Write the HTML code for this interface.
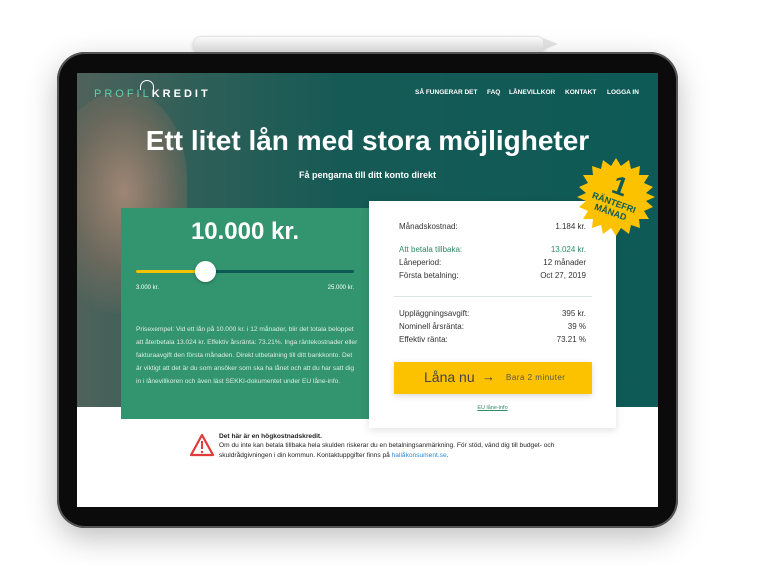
<!DOCTYPE html>
<html><head><meta charset="utf-8"><style>
*{margin:0;padding:0;box-sizing:border-box}
body{width:765px;height:566px;background:#fff;position:relative;overflow:hidden;font-family:"Liberation Sans",sans-serif}
.abs{position:absolute}
.pencil{left:193px;top:36px;width:352px;height:16px;border-radius:8px;background:linear-gradient(#fdfdfd,#e0e0e0);box-shadow:0 2px 4px rgba(0,0,0,.2),inset 0 0 0 1px #e6e6e6}
.tip{left:543px;top:38px;width:0;height:0;border-top:6px solid transparent;border-bottom:6px solid transparent;border-left:15px solid #e4e4e4}
.ipad{left:57px;top:52px;width:621px;height:476px;background:#0b0b0b;border-radius:28px;box-shadow:0 10px 30px rgba(0,0,0,.25),inset 0 0 0 2px #555}
.screen{left:77px;top:73px;width:581px;height:434px;background:#fff;overflow:hidden}
.hero{left:0;top:0;width:581px;height:334px;background:linear-gradient(90deg,#4f625b 0%,#2f5f58 20%,#165a55 45%,#0e5a57 100%)}
.face{left:-30px;top:20px;width:140px;height:220px;border-radius:50% 40% 40% 50%;background:radial-gradient(ellipse at 55% 45%,rgba(175,140,120,.85) 0%,rgba(130,110,95,.6) 45%,rgba(60,80,70,0) 75%)}
.nav{top:16px;font-size:6.5px;font-weight:bold;color:#fff;white-space:nowrap}
h1{left:0;width:581px;top:52px;text-align:center;color:#fff;font-size:28px;font-weight:bold;position:absolute}
.sub{left:0;width:581px;top:97px;text-align:center;color:#fff;font-size:9px;font-weight:bold}
.green{left:44px;top:135px;width:248px;height:211px;background:#339470}
.white{left:292px;top:128px;width:247px;height:227px;background:#fff;box-shadow:0 2px 8px rgba(0,0,0,.12)}
.row{position:absolute;left:0;width:247px;font-size:8px;color:#333}
.row span{position:absolute}
.row .l{left:30px}.row .r{right:30px}
</style></head><body>
<div class="abs pencil"></div><div class="abs tip"></div>
<div class="abs ipad"></div>
<div class="abs screen">
 <div class="abs hero"></div>
 <div class="abs face"></div>
 <div class="abs" style="left:17px;top:15px;font-size:11px;letter-spacing:3px;color:#5fd1a8">PROFIL<b style="color:#fff">KREDIT</b></div>
 <div class="abs" style="left:63px;top:7px;width:14px;height:10px;border:1.5px solid #fff;border-bottom:none;border-radius:8px 8px 0 0"></div>
 <div class="abs nav" style="left:338px">SÅ FUNGERAR DET</div>
 <div class="abs nav" style="left:410px">FAQ</div>
 <div class="abs nav" style="left:432px">LÅNEVILLKOR</div>
 <div class="abs nav" style="left:488px">KONTAKT</div>
 <div class="abs nav" style="left:530px">LOGGA IN</div>
 <h1>Ett litet lån med stora möjligheter</h1>
 <div class="abs sub">Få pengarna till ditt konto direkt</div>
 <div class="abs green">
  <div class="abs" style="left:0;width:248px;top:10px;text-align:center;color:#fff;font-size:24px;font-weight:bold">10.000 kr.</div>
  <div class="abs" style="left:15px;top:62px;width:218px;height:3px;background:#0d5a52;border-radius:2px"></div>
  <div class="abs" style="left:15px;top:62px;width:70px;height:3px;background:#f2c200;border-radius:2px"></div>
  <div class="abs" style="left:74px;top:53px;width:21px;height:21px;border-radius:50%;background:#fff;box-shadow:0 1px 3px rgba(0,0,0,.3)"></div>
  <div class="abs" style="left:15px;top:77px;font-size:6px;color:#fff">3.000 kr.</div>
  <div class="abs" style="right:15px;top:77px;font-size:6px;color:#fff">25.000 kr.</div>
  <div class="abs" style="left:15px;top:115px;width:222px;font-size:6.6px;line-height:13px;color:#d8eee4">Prisexempel: Vid ett lån på 10.000 kr. i 12 månader, blir det totala beloppet att återbetala 13.024 kr. Effektiv årsränta: 73.21%. Inga räntekostnader eller fakturaavgift den första månaden. Direkt utbetalning till ditt bankkonto. Det är viktigt att det är du som ansöker som ska ha lånet och att du har satt dig in i lånevillkoren och även läst SEKKI-dokumentet under EU låne-info.</div>
 </div>
 <div class="abs white">
  <div class="row" style="top:21px"><span class="l">Månadskostnad:</span><span class="r">1.184 kr.</span></div>
  <div class="row" style="top:44px;color:#2e8b64"><span class="l">Att betala tillbaka:</span><span class="r">13.024 kr.</span></div>
  <div class="row" style="top:57px"><span class="l">Låneperiod:</span><span class="r">12 månader</span></div>
  <div class="row" style="top:70px"><span class="l">Första betalning:</span><span class="r">Oct 27, 2019</span></div>
  <div class="abs" style="left:25px;top:95px;width:198px;height:1px;background:#dde6e4"></div>
  <div class="row" style="top:108px"><span class="l">Uppläggningsavgift:</span><span class="r">395 kr.</span></div>
  <div class="row" style="top:121px"><span class="l">Nominell årsränta:</span><span class="r">39 %</span></div>
  <div class="row" style="top:134px"><span class="l">Effektiv ränta:</span><span class="r">73.21 %</span></div>
  <div class="abs" style="left:25px;top:161px;width:198px;height:32px;background:#fcc200;box-shadow:0 2px 6px rgba(0,0,0,.15)">
   <span class="abs" style="left:30px;top:7px;font-size:14px;color:#444">Låna nu</span>
   <span class="abs" style="left:88px;top:7px;font-size:13px;color:#444">→</span>
   <span class="abs" style="left:112px;top:11px;font-size:8px;color:#555;letter-spacing:.5px">Bara 2 minuter</span>
  </div>
  <div class="abs" style="left:0;width:247px;top:204px;text-align:center;font-size:5.5px;color:#2e8b64;text-decoration:underline">EU låne-info</div>
 </div>
 <svg class="abs" style="left:500px;top:85px" width="78" height="78" viewBox="0 0 78 78">
  <polygon fill="#fcc200" points="39,0 44,8 52,2 54,11 63,8 62,17 72,17 67,25 76,29 69,35 78,39 69,43 76,49 67,53 72,61 62,61 63,70 54,67 52,76 44,70 39,78 34,70 26,76 24,67 15,70 16,61 6,61 11,53 2,49 9,43 0,39 9,35 2,29 11,25 6,17 16,17 15,8 24,11 26,2 34,8"/>
  <g transform="rotate(20 39 39)" fill="#0d5a57" font-family="Liberation Sans" font-weight="bold" text-anchor="middle">
   <text x="39" y="36" font-size="26">1</text>
   <text x="39" y="48" font-size="9">RÄNTEFRI</text>
   <text x="39" y="58" font-size="9">MÅNAD</text>
  </g>
 </svg>
 <svg class="abs" style="left:112px;top:360px" width="26" height="24" viewBox="0 0 26 24"><path d="M13 2 L24 22 H2 Z" fill="none" stroke="#e03c3c" stroke-width="2.2" stroke-linejoin="round"/><rect x="12" y="8" width="2" height="8" fill="#e03c3c"/><circle cx="13" cy="19" r="1.2" fill="#e03c3c"/></svg>
 <div class="abs" style="left:142px;top:359px;font-size:6.6px;line-height:9.3px;color:#222;width:380px"><b>Det här är en högkostnadskredit.</b><br>Om du inte kan betala tillbaka hela skulden riskerar du en betalningsanmärkning. För stöd, vänd dig till budget- och skuldrådgivningen i din kommun. Kontaktuppgifter finns på <span style="color:#2a8ad8">hallåkonsument.se</span>.</div>
</div>
</body></html>
